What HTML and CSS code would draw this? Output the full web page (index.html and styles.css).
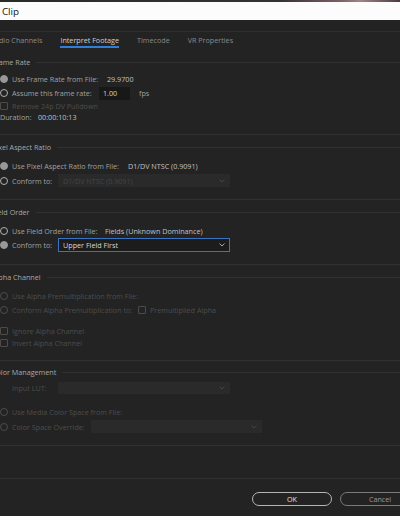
FILE: index.html
```html
<!DOCTYPE html>
<html>
<head>
<meta charset="utf-8">
<title>Modify Clip</title>
<link rel="stylesheet" href="styles.css">
</head>
<body>
<div class="topstrip"></div>
<div class="dialog">
  <div class="titlebar"><span class="title">Modify Clip</span></div>
  <div class="titlegap"></div>
  <div class="tabs">
    <span class="tab">Audio Channels</span>
    <span class="tab active">Interpret Footage</span>
    <span class="tab">Timecode</span>
    <span class="tab">VR Properties</span>
  </div>

  <section class="sec sec-frame">
    <div class="hdr"><span>Frame Rate</span></div>
    <div class="row r14"><span class="radio on"></span><span class="lbl w-fr1">Use Frame Rate from File:</span><span class="val">29.9700</span></div>
    <div class="row r14"><span class="radio"></span><span class="lbl w-fr2">Assume this frame rate:</span><span class="input">1.00</span><span class="lbl fps">fps</span></div>
    <div class="row r12 dis"><span class="check"></span><span class="lbl">Remove 24p DV Pulldown</span></div>
    <div class="row r10"><span class="lbl w-dur">Duration:</span><span class="val">00:00:10:13</span></div>
  </section>

  <section class="sec sec-pixel">
    <div class="hdr"><span>Pixel Aspect Ratio</span></div>
    <div class="row r15"><span class="radio on"></span><span class="lbl w-par1">Use Pixel Aspect Ratio from File:</span><span class="val">D1/DV NTSC (0.9091)</span></div>
    <div class="row r15"><span class="radio"></span><span class="lbl w-conf">Conform to:</span><span class="select disabled w-sel"><span class="sel-text">D1/DV NTSC (0.9091)</span><svg class="chev" viewBox="0 0 6 4" width="6" height="4"><polyline points="0.5,0.5 3,3 5.5,0.5" fill="none" stroke="currentColor" stroke-width="1"/></svg></span></div>
  </section>

  <section class="sec sec-field">
    <div class="hdr"><span>Field Order</span></div>
    <div class="row r15"><span class="radio"></span><span class="lbl w-fo1">Use Field Order from File:</span><span class="val">Fields (Unknown Dominance)</span></div>
    <div class="row r14"><span class="radio on"></span><span class="lbl w-conf">Conform to:</span><span class="select active w-sel"><span class="sel-text">Upper Field First</span><svg class="chev" viewBox="0 0 6 4" width="6" height="4"><polyline points="0.5,0.5 3,3 5.5,0.5" fill="none" stroke="currentColor" stroke-width="1"/></svg></span></div>
  </section>

  <section class="sec sec-alpha">
    <div class="hdr"><span>Alpha Channel</span></div>
    <div class="row r15 dis"><span class="radio"></span><span class="lbl">Use Alpha Premultiplication from File:</span></div>
    <div class="row r14 dis"><span class="radio"></span><span class="lbl w-ap2">Conform Alpha Premultiplication to:</span><span class="check"></span><span class="lbl">Premultiplied Alpha</span></div>
    <div class="spacer8"></div>
    <div class="row r12 dis"><span class="check"></span><span class="lbl">Ignore Alpha Channel</span></div>
    <div class="row r12 dis"><span class="check"></span><span class="lbl">Invert Alpha Channel</span></div>
  </section>

  <section class="sec sec-color">
    <div class="hdr"><span>Color Management</span></div>
    <div class="row r14 dis indent"><span class="lbl w-conf">Input LUT:</span><span class="select disabled w-sel lut"><span class="sel-text"></span><svg class="chev" viewBox="0 0 6 4" width="6" height="4"><polyline points="0.5,0.5 3,3 5.5,0.5" fill="none" stroke="currentColor" stroke-width="1"/></svg></span></div>
    <div class="spacer9"></div>
    <div class="row r15 dis"><span class="radio"></span><span class="lbl">Use Media Color Space from File:</span></div>
    <div class="row r15 dis"><span class="radio"></span><span class="lbl w-cso">Color Space Override:</span><span class="select disabled w-sel2"><span class="sel-text"></span><svg class="chev" viewBox="0 0 6 4" width="6" height="4"><polyline points="0.5,0.5 3,3 5.5,0.5" fill="none" stroke="currentColor" stroke-width="1"/></svg></span></div>
  </section>

  <section class="sec sec-empty"></section>

  <div class="footer">
    <button class="btn ok">OK</button>
    <button class="btn cancel">Cancel</button>
  </div>
</div>
</body>
</html>
```
FILE: styles.css
```css
* { box-sizing: border-box; }
html, body { margin: 0; padding: 0; }
body {
  width: 400px;
  height: 516px;
  overflow: hidden;
  background: #232323;
  font-family: "Open Sans", "Noto Sans", sans-serif;
  font-size: 7.2px;
  color: #a0a0a0;
}
.topstrip {
  height: 2px;
  background: linear-gradient(90deg, #2a2a2a 0%, #333 70%, #7d6064 85%, #a08488 90%, #4a3c3e 100%);
}
.dialog {
  margin-left: -10px;
  width: 432px;
}
.titlebar {
  height: 18px;
  background: #fcfcfc;
  display: flex;
  align-items: center;
}
.title {
  color: #111;
  font-size: 9.8px;
  margin-left: -22px;
}
.titlegap {
  height: 12px;
  border-bottom: 1px solid #2e2e2e;
}
.tabs {
  display: flex;
  gap: 18px;
  height: 16px;
}
.tab {
  padding-top: 3px;
  line-height: 11px;
  border-bottom: 2px solid transparent;
  color: #8a8a8a;
  white-space: nowrap;
}
.tab.active {
  color: #d0d0d0;
  border-bottom-color: #2f7fd8;
}
.sec {
  border-bottom: 1px solid #313131;
}
.hdr {
  display: flex;
  align-items: center;
  height: 12px;
  padding-left: 2px;
  color: #a8a8a8;
  white-space: nowrap;
}
.hdr::after {
  content: "";
  flex: 1;
  height: 1px;
  background: #313131;
  margin-left: 6px;
}
.sec-frame { padding: 8px 0 12px; }
.sec-frame .hdr { margin-bottom: 4px; }
.sec-pixel { padding: 6px 0 11px; }
.sec-pixel .hdr { margin-bottom: 5px; }
.sec-field { padding: 6px 0 12px; }
.sec-field .hdr { margin-bottom: 5px; }
.sec-alpha { padding: 6px 0 11px; }
.sec-alpha .hdr { margin-bottom: 5px; }
.sec-color { padding: 5px 0 11px; }
.sec-color .hdr { margin-bottom: 3px; }
.sec-empty { height: 33px; }
.spacer8 { height: 8px; }
.spacer9 { height: 9px; }

.row {
  display: flex;
  align-items: center;
  padding-left: 10px;
  white-space: nowrap;
}
.row.indent { padding-left: 22px; }
.r15 { height: 15px; }
.r14 { height: 14px; }
.r12 { height: 12px; }
.r10 { height: 10px; }

.radio {
  flex: none;
  width: 8px;
  height: 8px;
  border-radius: 50%;
  border: 1px solid #b0b0b0;
  margin-right: 4px;
}
.radio.on {
  background: #989898;
  border-color: #989898;
}
.check {
  flex: none;
  width: 8px;
  height: 8px;
  border: 1px solid #4c4c4c;
  border-radius: 1px;
  margin-right: 4px;
}
.lbl { flex: none; }
.val { color: #c0c0c0; }
.dis { color: #4d4d4d; }
.dis .radio { border-color: #4c4c4c; }

.w-fr1 { width: 95px; }
.w-fr2 { width: 87px; }
.w-dur { width: 38px; }
.w-par1 { width: 116px; }
.w-conf { width: 46px; }
.w-fo1 { width: 93px; }
.w-ap2 { width: 126px; }
.w-cso { width: 79px; }

.input {
  width: 31px;
  height: 13px;
  line-height: 13px;
  background: #181818;
  color: #d0d0d0;
  padding-left: 4px;
  margin-right: 9px;
}
.fps { color: #a0a0a0; }

.select {
  flex: none;
  display: flex;
  align-items: center;
  justify-content: space-between;
  height: 13px;
  padding: 0 5px;
}
.w-sel { width: 172px; }
.w-sel2 { width: 171px; }
.select.disabled {
  background: #2a2a2a;
  color: #454545;
}
.select.active {
  height: 14px;
  background: #1c1c1c;
  border: 1px solid #3773c0;
  color: #d6d6d6;
  padding: 0 4px;
}
.select.active .chev { color: #a8a8a8; }
.select.lut { height: 12px; }
.chev { flex: none; display: block; }

.footer {
  display: flex;
  justify-content: flex-end;
  gap: 8px;
  padding-top: 13px;
  padding-right: 2px;
}
.btn {
  width: 80px;
  height: 14px;
  border-radius: 7px;
  background: transparent;
  font-family: inherit;
  font-size: 7.2px;
  line-height: 10px;
  padding: 0;
}
.btn.ok {
  border: 1.5px solid #b4b4b4;
  color: #e0e0e0;
}
.btn.cancel {
  border: 1.5px solid #7a7a7a;
  color: #9a9a9a;
}
```
